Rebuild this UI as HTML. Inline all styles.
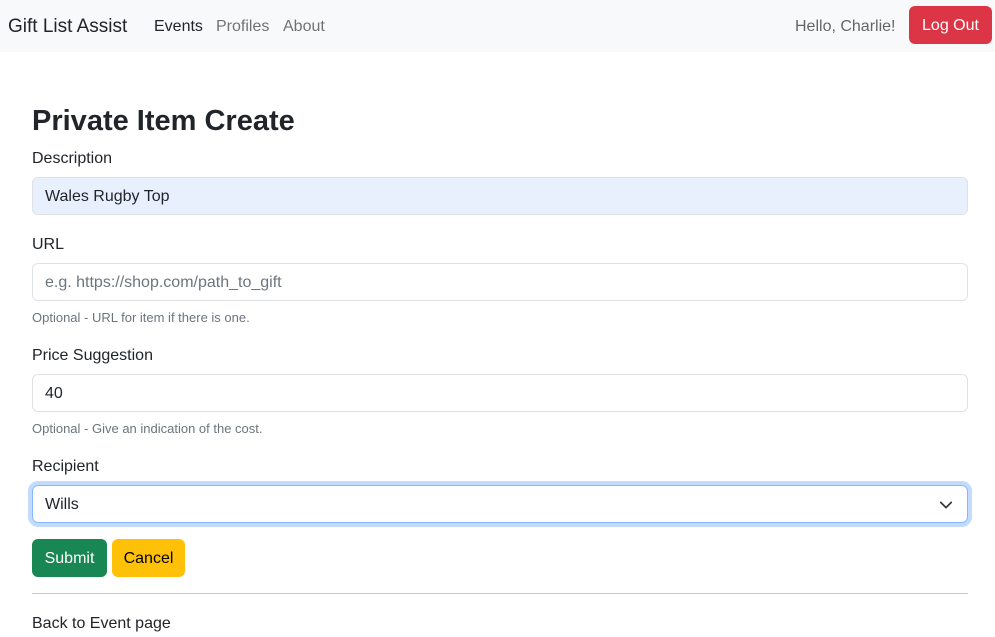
<!DOCTYPE html>
<html><head><meta charset="utf-8"><style>
*{box-sizing:border-box;margin:0;padding:0}
body{font-family:"Liberation Sans",Arial,sans-serif;font-size:16px;color:#212529;background:#fff;width:995px;height:637px;overflow:hidden}
nav{height:52px;background:#f8f9fa;position:relative}
.brand{position:absolute;left:8px;top:16px;font-size:19px;color:#212529}
.nl{position:absolute;top:18px;font-size:16px;color:rgba(0,0,0,.55)}
.hello{position:absolute;left:795px;top:18px;color:rgba(0,0,0,.6)}
.logout{position:absolute;left:909px;top:6px;width:83px;height:38px;background:#dc3545;color:#fff;border-radius:6px;text-align:center;line-height:40px}
h1{position:absolute;left:32px;top:105px;font-size:29px;font-weight:bold}
.lbl{position:absolute;left:32px}
.inp{position:absolute;left:32px;width:936px;height:38px;border:1px solid #dee2e6;border-radius:6px;padding:0 12px;line-height:38px}
.help{position:absolute;left:32px;font-size:13px;color:#6c757d}
.btn{position:absolute;top:539px;height:38px;border-radius:6px;line-height:40px;text-align:center}
</style></head><body>
<nav>
<div class="brand">Gift List Assist</div>
<div class="nl" style="left:154px;color:#212529">Events</div>
<div class="nl" style="left:216px">Profiles</div>
<div class="nl" style="left:283px">About</div>
<div class="hello">Hello, Charlie!</div>
<div class="logout">Log Out</div>
</nav>
<h1>Private Item Create</h1>
<div class="lbl" style="top:150px">Description</div>
<div class="inp" style="top:177px;background:#e8f0fe">Wales Rugby Top</div>
<div class="lbl" style="top:236px">URL</div>
<div class="inp" style="top:263px;color:#6c757d">e.g. https://shop.com/path_to_gift</div>
<div class="help" style="top:310px">Optional - URL for item if there is one.</div>
<div class="lbl" style="top:347px">Price Suggestion</div>
<div class="inp" style="top:374px">40</div>
<div class="help" style="top:421px">Optional - Give an indication of the cost.</div>
<div class="lbl" style="top:458px">Recipient</div>
<div class="inp" style="top:485px;border-color:#86b7fe;box-shadow:0 0 0 4px rgba(13,110,253,.25)">Wills
<svg style="position:absolute;right:14px;top:14px" width="14" height="10" viewBox="0 0 16 10"><path d="M2 2l6 6 6-6" fill="none" stroke="#343a40" stroke-width="2" stroke-linecap="round" stroke-linejoin="round"/></svg></div>
<div class="btn" style="left:32px;width:75px;background:#198754;color:#fff">Submit</div>
<div class="btn" style="left:112px;width:73px;background:#ffc107;color:#000">Cancel</div>
<div style="position:absolute;left:32px;top:593px;width:936px;border-top:1px solid #c8c9ca"></div>
<div class="lbl" style="top:615px">Back to Event page</div>
</body></html>
